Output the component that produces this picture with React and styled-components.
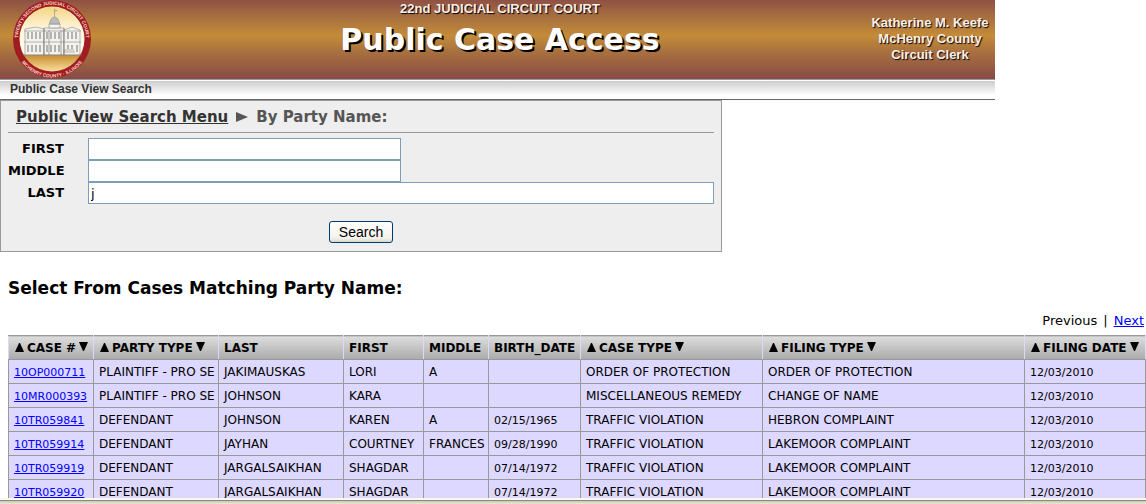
import React from "react";
import styled, { createGlobalStyle } from "styled-components";

const columns = [
  { title: "CASE #", width: 85, sortable: true, numeric: true },
  { title: "PARTY TYPE", width: 125, sortable: true },
  { title: "LAST", width: 125 },
  { title: "FIRST", width: 80 },
  { title: "MIDDLE", width: 65 },
  { title: "BIRTH_DATE", width: 92, numeric: true },
  { title: "CASE TYPE", width: 182, sortable: true },
  { title: "FILING TYPE", sortable: true },
  { title: "FILING DATE", width: 121, sortable: true, numeric: true },
];

const cases = [
  ["10OP000711", "PLAINTIFF - PRO SE", "JAKIMAUSKAS", "LORI", "A", "", "ORDER OF PROTECTION", "ORDER OF PROTECTION", "12/03/2010"],
  ["10MR000393", "PLAINTIFF - PRO SE", "JOHNSON", "KARA", "", "", "MISCELLANEOUS REMEDY", "CHANGE OF NAME", "12/03/2010"],
  ["10TR059841", "DEFENDANT", "JOHNSON", "KAREN", "A", "02/15/1965", "TRAFFIC VIOLATION", "HEBRON COMPLAINT", "12/03/2010"],
  ["10TR059914", "DEFENDANT", "JAYHAN", "COURTNEY", "FRANCES", "09/28/1990", "TRAFFIC VIOLATION", "LAKEMOOR COMPLAINT", "12/03/2010"],
  ["10TR059919", "DEFENDANT", "JARGALSAIKHAN", "SHAGDAR", "", "07/14/1972", "TRAFFIC VIOLATION", "LAKEMOOR COMPLAINT", "12/03/2010"],
  ["10TR059920", "DEFENDANT", "JARGALSAIKHAN", "SHAGDAR", "", "07/14/1972", "TRAFFIC VIOLATION", "LAKEMOOR COMPLAINT", "12/03/2010"],
];

const Seal = () => (
  <SealImage viewBox="0 0 80 80" role="img" aria-label="McHenry County seal">
    <defs>
      <linearGradient id="sealSky" x1="0" y1="0" x2="0" y2="1">
        <stop offset="0" stopColor="#f3d583" />
        <stop offset="0.35" stopColor="#fff6dc" />
        <stop offset="0.73" stopColor="#fffaf0" />
        <stop offset="0.75" stopColor="#c98f35" />
        <stop offset="1" stopColor="#f8df9c" />
      </linearGradient>
      <path id="sealTop" d="M12 58 A34 34 0 1 1 68 58" />
      <path id="sealBottom" d="M2.500 40 A37.500 37.500 0 0 0 77.500 40" />
    </defs>
    <circle cx="40" cy="39" r="39" fill="#a01c20" />
    <circle cx="40" cy="39" r="32.500" fill="url(#sealSky)" />
    <g fontFamily="Liberation Sans, sans-serif" fontSize="4.800" fill="#f6d9c8">
      <text textAnchor="middle">
        <textPath href="#sealTop" startOffset="50%">TWENTY-SECOND JUDICIAL CIRCUIT COURT</textPath>
      </text>
      <text textAnchor="middle">
        <textPath href="#sealBottom" startOffset="50%">MCHENRY COUNTY · ILLINOIS</textPath>
      </text>
    </g>
    <g fill="#f4f2ec" stroke="#888" strokeWidth="0.6">
      <path d="M13 29 L24 27 L32 29 V55 H13Z" />
      <path d="M32 28 H52 V55 H32Z" />
      <path d="M52 30 L60 27 L68 30 V55 H52Z" />
      <path d="M37 28 V24 H48 V28Z" />
      <path d="M37.500 24 Q38 18 42.500 17 Q47 18 47.500 24Z" fill="#bbb" />
      <path d="M42.500 17 V9 M42.500 9.500 L45 10.500 L42.500 11.500" />
      <path d="M12 31 H69 M12 42 H69 M11 55 H70 M52 50 H62 M51 52 H63" />
    </g>
    <path
      d="M16 32V39M20 32V39M24 32V39M28 32V39M35 32V39M39 32V39M43 32V39M47 32V39M56 32V39M60 32V39M64 32V39M16 45V52M20 45V52M24 45V52M28 45V52M35 45V52M39 45V52M43 45V52M47 45V52M56 45V49M60 45V49M65 45V52"
      stroke="#999"
      strokeWidth="1.4"
    />
    <path d="M32 28V55M52 28V55M37 30V55M49 30V55" stroke="#555" strokeWidth="0.5" />
  </SealImage>
);

const Arrow = ({ down }) => (
  <svg width="9" height="9" viewBox="0 0 9 9" aria-hidden="true">
    <path d={down ? "M0 0H9L5 9H4Z" : "M0 9H9L5 0H4Z"} fill="#000" />
  </svg>
);

const App = () => {
  return (
    <Window>
      <GlobalStyle />
      <Content>
        <Banner>
          <Seal />
          <Titles>
            <Court>22nd JUDICIAL CIRCUIT COURT</Court>
            <Title>Public Case Access</Title>
          </Titles>
          <Clerk>
            Katherine M. Keefe
            <br />
            McHenry County
            <br />
            Circuit Clerk
          </Clerk>
        </Banner>
        <SubBar>Public Case View Search</SubBar>
        <Panel>
          <Crumbs>
            <MenuLink href="#menu">Public View Search Menu</MenuLink>
            <svg width="12" height="12" viewBox="0 0 12 12" aria-hidden="true">
              <path d="M0 1L12 6L0 11Z" fill="#555" />
            </svg>
            <span>By Party Name:</span>
          </Crumbs>
          <Fields>
            <Label htmlFor="first">FIRST</Label>
            <Input id="first" $half />
            <Label htmlFor="middle">MIDDLE</Label>
            <Input id="middle" $half />
            <Label htmlFor="last">LAST</Label>
            <Input id="last" defaultValue="j" />
          </Fields>
          <SearchButton type="button">Search</SearchButton>
        </Panel>
        <Results>
          <Heading>Select From Cases Matching Party Name:</Heading>
          <Pager>
            <span>Previous</span>
            <span>|</span>
            <a href="#next">Next</a>
          </Pager>
          <Table>
            <colgroup>
              {columns.map((col) => (
                <Col key={col.title} $width={col.width} />
              ))}
            </colgroup>
            <thead>
              <tr>
                {columns.map((col) => (
                  <Th key={col.title} scope="col" $sortable={col.sortable}>
                    <HeadCell>
                      {col.sortable && (
                        <SortButton type="button" aria-label={`Sort ${col.title} ascending`}>
                          <Arrow />
                        </SortButton>
                      )}
                      {col.title}
                      {col.sortable && (
                        <SortButton type="button" $raised aria-label={`Sort ${col.title} descending`}>
                          <Arrow down />
                        </SortButton>
                      )}
                    </HeadCell>
                  </Th>
                ))}
              </tr>
            </thead>
            <tbody>
              {cases.map((row) => (
                <tr key={row[0]}>
                  {row.map((value, i) => (
                    <Td key={columns[i].title} $numeric={columns[i].numeric}>
                      {i === 0 ? <a href={`#${value}`}>{value}</a> : value}
                    </Td>
                  ))}
                </tr>
              ))}
            </tbody>
          </Table>
        </Results>
      </Content>
      <WindowEdge />
    </Window>
  );
};

export default App;

const GlobalStyle = createGlobalStyle`
  body {
    margin: 0;
    background: #fff;
    color: #000;
    font-family: Verdana, "DejaVu Sans", sans-serif;
  }

  * {
    box-sizing: border-box;
  }

  a {
    color: #00f;
  }
`;

const Window = styled.div`
  display: flex;
  flex-direction: column;
  height: 100vh;
`;

const Content = styled.main`
  flex: 1;
  min-height: 0;
  overflow: hidden;
`;

const WindowEdge = styled.div`
  height: 6px;
  border-top: 2px solid #fbf9ec;
  background: linear-gradient(#8c8a80 1px, #c9c5b2 1px, #ece9d8);
`;

const Banner = styled.header`
  display: grid;
  grid-template-columns: 135px 1fr 130px;
  max-width: 995px;
  height: 79px;
  background: linear-gradient(#8f5145, #a8703f 22%, #c48b38 45%, #a8703f 66%, #874b46);
  font-family: "Liberation Sans", Arial, sans-serif;
  font-weight: bold;
  color: #fff;
`;

const SealImage = styled.svg`
  width: 80px;
  height: 80px;
  margin-left: 12px;
`;

const Titles = styled.div`
  display: flex;
  flex-direction: column;
  align-items: center;
`;

const Court = styled.div`
  font-size: 13px;
  line-height: 17px;
  color: #f6eee8;
  text-shadow: 1px 1px 1px #000;
`;

const Title = styled.h1`
  margin: 4px 0 0;
  font-family: Verdana, "DejaVu Sans", sans-serif;
  font-size: 30px;
  line-height: 38px;
  text-shadow: 2px 2px 0 #000;
`;

const Clerk = styled.div`
  padding-top: 15px;
  font-size: 13px;
  line-height: 16px;
  text-align: center;
  color: #f8f0e8;
  text-shadow: 1px 1px 1px #000;
`;

const SubBar = styled.div`
  max-width: 995px;
  height: 21px;
  padding-left: 10px;
  border-top: 1px solid #999;
  border-bottom: 1px solid #666;
  background: linear-gradient(#fff 1px, #ccc 1px, #fff 80%);
  font-family: "Liberation Sans", Arial, sans-serif;
  font-size: 12px;
  font-weight: bold;
  line-height: 19px;
  color: #333;
`;

const Panel = styled.section`
  display: flex;
  flex-direction: column;
  max-width: 722px;
  padding: 0 7px 8px;
  border: 1px solid #999;
  background: #eee;
`;

const Crumbs = styled.nav`
  display: flex;
  align-items: center;
  gap: 8px;
  height: 32px;
  padding-left: 8px;
  border-bottom: 1px solid #999;
  font-size: 15px;
  font-weight: bold;
  color: #555;
`;

const MenuLink = styled.a`
  color: #333;
`;

const Fields = styled.div`
  display: grid;
  grid-template-columns: 56px 1fr;
  column-gap: 24px;
  padding-top: 5px;
`;

const Label = styled.label`
  font-size: 13px;
  font-weight: bold;
  line-height: 22px;
  text-align: right;
`;

const Input = styled.input`
  width: ${(props) => (props.$half ? "50%" : "100%")};
  height: 22px;
  padding: 1px 2px;
  border: 1px solid #7f9db9;
  background: #fff;
  font-family: Verdana, "DejaVu Sans", sans-serif;
  font-size: 13px;
`;

const SearchButton = styled.button`
  align-self: center;
  width: 64px;
  height: 22px;
  margin-top: 17px;
  padding: 0;
  border: 1px solid #003c74;
  border-radius: 3px;
  background: linear-gradient(#fff, #f3f2ec 80%, #dcd8cc);
  font-family: "Liberation Sans", Arial, sans-serif;
  font-size: 14px;
  color: #000;
`;

const Results = styled.section`
  padding-left: 8px;
`;

const Heading = styled.h2`
  margin: 26px 0 14px;
  font-size: 17px;
  line-height: 20px;
`;

const Pager = styled.nav`
  display: flex;
  justify-content: flex-end;
  gap: 6px;
  padding: 0 2px 5px 0;
  font-size: 13px;
  line-height: 18px;
`;

const Table = styled.table`
  width: 100%;
  table-layout: fixed;
  border-collapse: collapse;
  border-left: 1px solid #999;
`;

const Col = styled.col`
  width: ${(props) => (props.$width ? `${props.$width}px` : "auto")};
`;

const Th = styled.th`
  height: 24px;
  padding: 1px 0 0 ${(props) => (props.$sortable ? "6px" : "5px")};
  border: 1px solid #999;
  border-left-color: #ddd8ff;
  border-right-color: #ddd8ff;
  background: linear-gradient(#ddd, #aaa);
  font-size: 12px;
  text-align: left;
  white-space: nowrap;
`;

const HeadCell = styled.div`
  display: flex;
  align-items: center;
  gap: 3px;
`;

const SortButton = styled.button`
  display: flex;
  padding: ${(props) => (props.$raised ? "0 0 3px" : "0 0 1px")};
  border: none;
  background: none;
  cursor: pointer;
`;

const Td = styled.td`
  height: 24px;
  padding: 1px 0 0 5px;
  border: 1px solid #999;
  background: #ddd8ff;
  font-size: ${(props) => (props.$numeric ? "11px" : "12px")};
  white-space: nowrap;
`;
